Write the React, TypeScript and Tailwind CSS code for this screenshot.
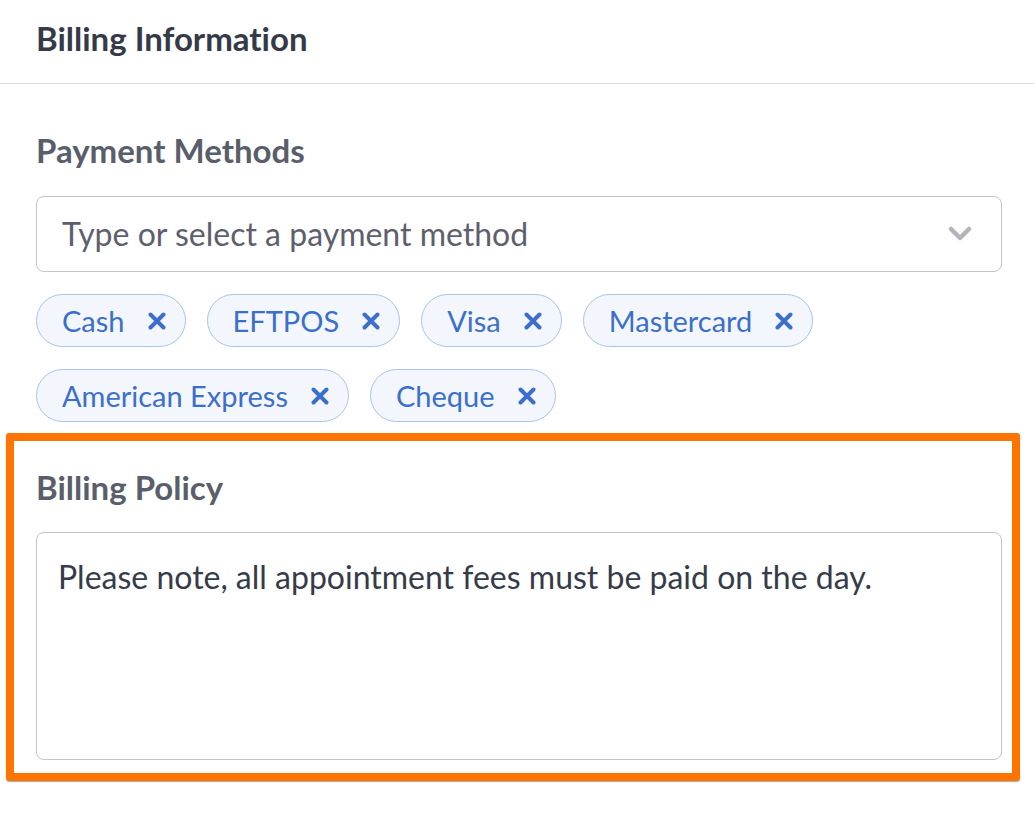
const methods = ['Cash', 'EFTPOS', 'Visa', 'Mastercard', 'American Express', 'Cheque'];

function Chip({ label }: { label: string }) {
  return (
    <span className="inline-flex h-[53px] items-center gap-[23px] rounded-full border border-[#a9c3ea] bg-[#f3f7fd] pl-[25px] pr-[19px] text-[29px] text-[#3b6fcb]">
      {label}
      <svg width="18" height="18" viewBox="0 0 18 18" aria-hidden="true">
        <path d="M2.5 2.5l13 13M15.5 2.5l-13 13" fill="none" stroke="#3b6fcb" strokeWidth="4" strokeLinecap="round" />
      </svg>
    </span>
  );
}

export default function App() {
  return (
    <div className="min-h-screen bg-white font-['Lato','Noto_Sans',sans-serif] [font-variant-ligatures:none]">
      <div className="h-[84px] border-b border-[#dddddd] px-[36px] pt-[19px] text-[33px] leading-[38px] font-bold text-[#353a48]">
        Billing Information
      </div>

      <section className="px-[36px] pt-[47px]">
        <h2 className="text-[33px] leading-[38px] font-bold text-[#5a5e6b]">Payment Methods</h2>
        <div className="mt-[27px] flex h-[76px] w-[966px] items-center justify-between rounded-[8px] border border-[#c4c5c9] pl-[25px] pr-[29px]">
          <span className="text-[32px] text-[#5d606c]">Type or select a payment method</span>
          <svg width="24" height="16" viewBox="0 0 24 16" aria-hidden="true">
            <path d="M3 3l9 9 9-9" fill="none" stroke="#b3b5ba" strokeWidth="4.5" strokeLinecap="round" strokeLinejoin="round" />
          </svg>
        </div>
        <div className="mt-[22px] flex w-[966px] flex-wrap gap-x-[21px] gap-y-[22px]">
          {methods.map((m) => (
            <Chip key={m} label={m} />
          ))}
        </div>
      </section>

      <section className="mt-[11px] ml-[6px] w-[1014px] rounded-[3px] border-[8px] border-[#ff7300] pt-[27px] pr-[10px] pb-[13px] pl-[22px] shadow-[0_1px_1px_rgba(0,0,0,0.35)]">
        <h2 className="text-[33px] leading-[38px] font-bold text-[#5a5e6b]">Billing Policy</h2>
        <div className="mt-[26px] h-[228px] w-[966px] rounded-[8px] border border-[#c4c5c9] px-[21px] pt-[25px] text-[32px] leading-[38px] text-[#363b49]">
          Please note, all appointment fees must be paid on the day.
        </div>
      </section>
    </div>
  );
}
